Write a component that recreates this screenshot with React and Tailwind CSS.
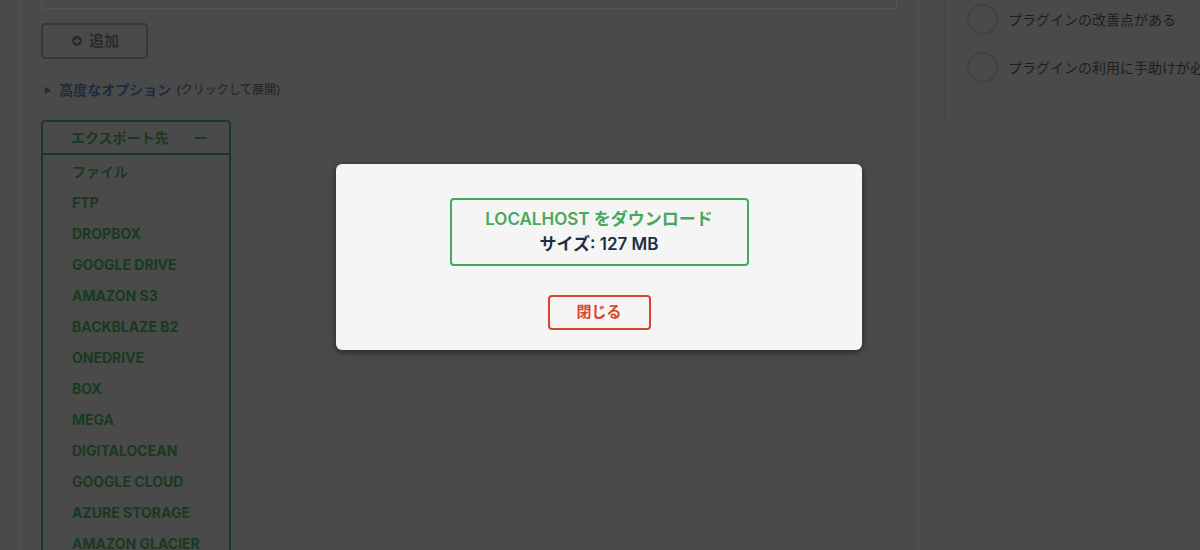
import { PlusCircle } from 'lucide-react'

const destinations = [
  'ファイル',
  'FTP',
  'DROPBOX',
  'GOOGLE DRIVE',
  'AMAZON S3',
  'BACKBLAZE B2',
  'ONEDRIVE',
  'BOX',
  'MEGA',
  'DIGITALOCEAN',
  'GOOGLE CLOUD',
  'AZURE STORAGE',
  'AMAZON GLACIER',
]

const feedback = ['プラグインの改善点がある', 'プラグインの利用に手助けが必要']

const font = { fontFamily: 'Inter, "Noto Sans CJK JP", sans-serif' }

export default function App() {
  return (
    <div className="relative w-[1200px] h-[550px] overflow-hidden bg-[#4a4a4a]" style={font}>
      {/* dimmed page behind the modal */}
      <div className="flex h-full">
        <div className="w-[20px] shrink-0 border-r border-[#535353]" />

        {/* main column */}
        <div className="w-[899px] shrink-0 border-r border-[#545454] pl-[21px] pr-[21px]">
          <div className="h-[8px] -mt-[10px] pt-[18px] rounded-b-[4px] border border-[#545454] border-t-0" />

          <button
            type="button"
            className="mt-[14px] flex h-[36px] w-[107px] items-center justify-center gap-[5px] rounded-[4px] border-2 border-[#383838] text-[15px] font-semibold text-[#2a2a2a]"
          >
            <PlusCircle size={14} strokeWidth={3} className="text-[#4a4a4a] fill-[#2a2a2a]" />
            追加
          </button>

          <div className="mt-[20px] flex items-center gap-[8px] pl-[3px]">
            <span className="text-[8px] text-[#1d2c3c]">▶</span>
            <span className="text-[14px] font-semibold text-[#1d2c3c]">高度なオプション</span>
            <span className="-ml-[3px] text-[12px] text-[#222]">(クリックして展開)</span>
          </div>

          <div className="mt-[20px] w-[190px] rounded-t-[4px] border-2 border-b-0 border-[#173a20]">
            <div className="flex h-[33px] items-center border-b-2 border-[#173a20] pl-[28px] pr-[22px]">
              <span className="flex-1 text-[14px] font-bold text-[#173a20]">エクスポート先</span>
              <span className="h-[2px] w-[12px] bg-[#173a20]" />
            </div>
            <ul className="pt-[1px]">
              {destinations.map((d) => (
                <li key={d} className="flex h-[31px] items-center pl-[29px] text-[14px] font-bold text-[#173a20]">
                  {d}
                </li>
              ))}
            </ul>
          </div>
        </div>

        {/* side column */}
        <div className="flex-1 pl-[25px]">
          <div className="h-[123px] rounded-bl-[4px] border border-r-0 border-t-0 border-[#454545] pl-[22px] pt-[4px]">
            {feedback.map((f) => (
              <div key={f} className="mb-[17px] flex items-center gap-[10px]">
                <span className="h-[31px] w-[31px] shrink-0 rounded-full border-2 border-[#424242]" />
                <span className="whitespace-nowrap text-[14px] text-[#1e1e1e]">{f}</span>
              </div>
            ))}
          </div>
        </div>
      </div>

      {/* download modal */}
      <div className="absolute left-[336px] top-[164px] flex h-[186px] w-[526px] flex-col items-center rounded-[6px] bg-[#f5f5f5] shadow-[0_2px_6px_rgba(0,0,0,0.5)]">
        <div className="mt-[34px] flex h-[68px] w-[299px] flex-col items-center justify-center rounded-[4px] border-2 border-[#45a85c]">
          <div className="text-[17px] font-semibold leading-[25px] text-[#45a85c]">LOCALHOST をダウンロード</div>
          <div className="text-[17px] font-semibold leading-[25px] text-[#1f2d42]">サイズ: 127 MB</div>
        </div>
        <button
          type="button"
          className="mt-[29px] flex h-[35px] w-[103px] items-center justify-center rounded-[4px] border-2 border-[#d9432f] text-[15px] font-bold text-[#d9432f]"
        >
          閉じる
        </button>
      </div>
    </div>
  )
}
